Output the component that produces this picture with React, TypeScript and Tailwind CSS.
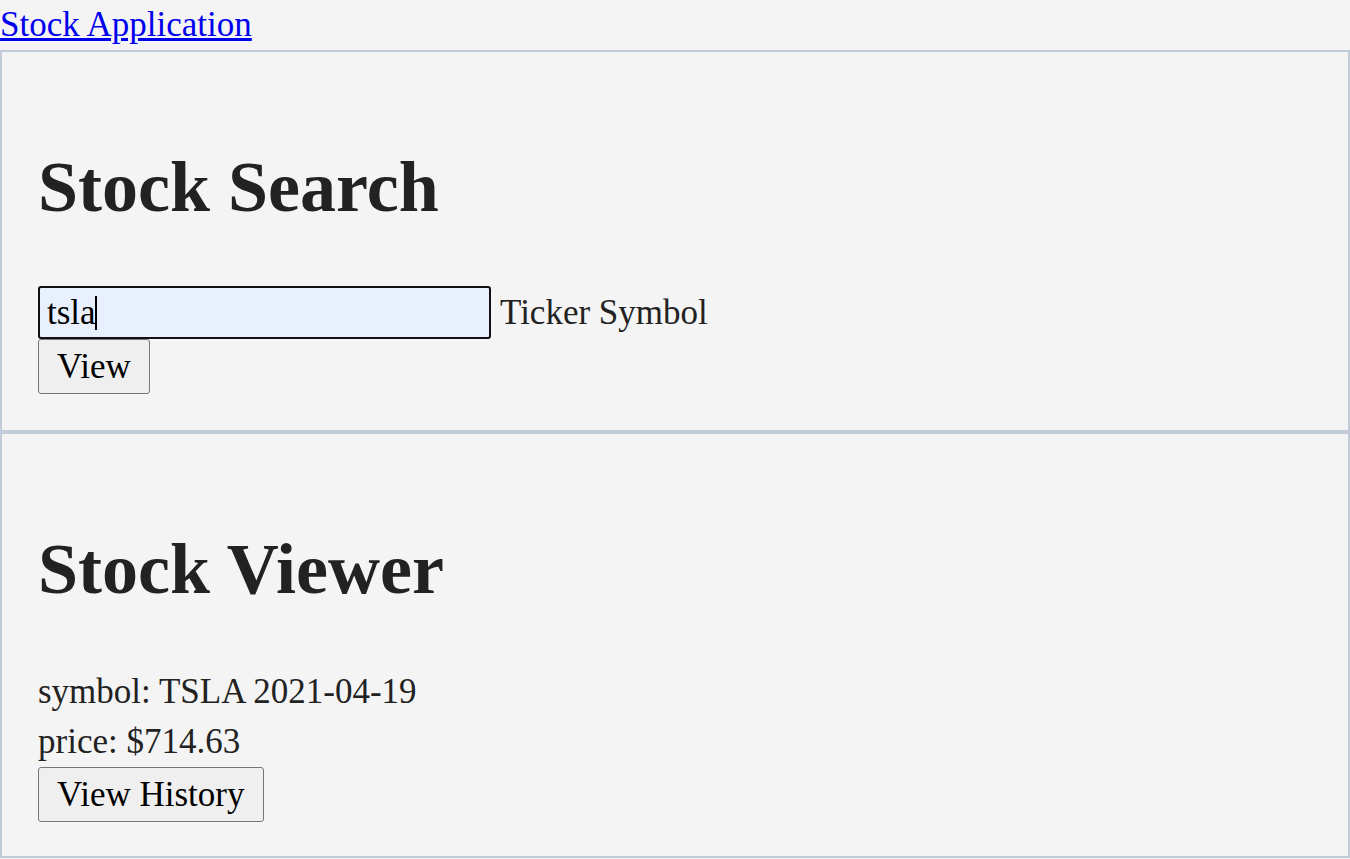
import React from "react";

export default function App() {
  const serif = { fontFamily: '"Liberation Serif", "Times New Roman", serif' };
  return (
    <div className="min-h-[859px] w-[1350px] bg-[#f4f4f4] text-[#222222]" style={serif}>
      <div className="h-[50px] text-[35px] leading-[50px]">
        <a href="#" className="text-[#0000ee] underline">Stock Application</a>
      </div>
      <section className="border-2 border-[#c2ccd9] pt-[95px] pb-[36px] pl-[36px] pr-[36px]">
        <h1 className="text-[72px] font-bold leading-[80px] mb-[59px]">Stock Search</h1>
        <div className="flex items-start h-[53px] text-[35px]">
          <div className="relative">
            <input
              defaultValue="tsla"
              className="w-[453px] h-[53px] border-2 border-[#111111] rounded-[3px] bg-[#e8f0fe] pl-[7px] text-[35px] text-black outline-none caret-transparent"
              style={serif}
            />
            <span className="absolute left-[57px] top-[10px] h-[34px] w-[2px] bg-black" />
          </div>
          <span className="ml-[9px] leading-[53px]">Ticker Symbol</span>
        </div>
        <button
          className="h-[55px] pl-[18px] pr-[18px] border border-[#767676] rounded-[3px] bg-[#efefef] text-[35px] leading-[40px] text-black"
          style={serif}
        >
          View
        </button>
      </section>
      <section className="border-2 border-[#c2ccd9] pt-[95px] pb-[34px] pl-[36px] pr-[36px]">
        <h1 className="text-[72px] font-bold leading-[80px] mb-[58px]">Stock Viewer</h1>
        <div className="text-[35px] leading-[50px]">symbol: TSLA 2021-04-19</div>
        <div className="text-[35px] leading-[50px]">price: $714.63</div>
        <button
          className="h-[55px] pl-[18px] pr-[19px] border border-[#767676] rounded-[3px] bg-[#efefef] text-[35px] leading-[40px] text-black"
          style={serif}
        >
          View History
        </button>
      </section>
    </div>
  );
}
